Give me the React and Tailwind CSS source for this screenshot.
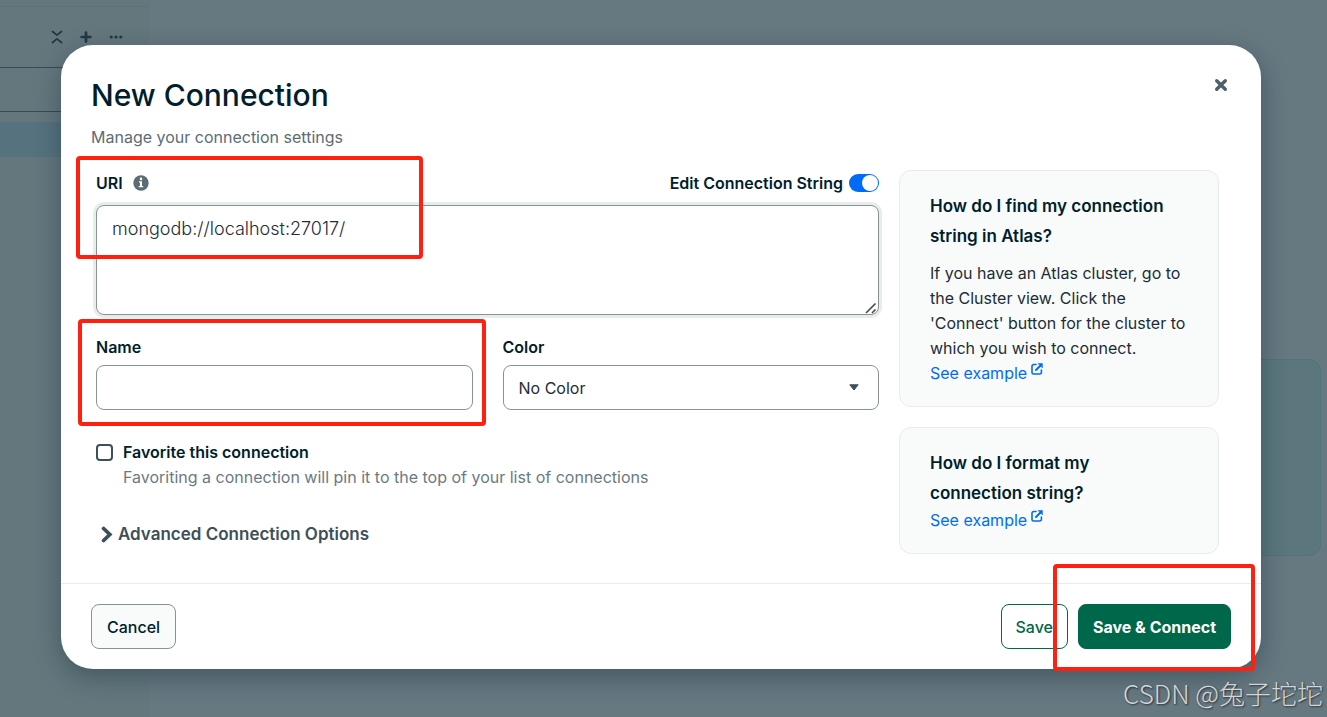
import React from "react";

function UnfoldLessIcon() {
  return (
    <svg width="12" height="14" viewBox="0 0 12 14" fill="none" stroke="currentColor" strokeWidth="1.700" strokeLinecap="round" strokeLinejoin="round" aria-hidden="true">
      <path d="M1.500 1.500 6 5.200l4.500-3.700M1.500 12.500 6 8.800l4.500 3.700" />
    </svg>
  );
}

function PlusIcon() {
  return (
    <svg width="12" height="12" viewBox="0 0 12 12" fill="none" stroke="currentColor" strokeWidth="2.700" strokeLinecap="round" aria-hidden="true">
      <path d="M6 1.600v8.800M1.600 6h8.800" />
    </svg>
  );
}

function EllipsisIcon() {
  return (
    <svg width="14" height="4" viewBox="0 0 14 4" fill="currentColor" aria-hidden="true">
      <circle cx="2.200" cy="2" r="1.600" />
      <circle cx="7" cy="2" r="1.600" />
      <circle cx="11.800" cy="2" r="1.600" />
    </svg>
  );
}

function CloseIcon() {
  return (
    <svg width="14" height="14" viewBox="0 0 14 14" fill="none" stroke="currentColor" strokeWidth="3.400" strokeLinecap="round" aria-hidden="true">
      <path d="m2.700 2.700 8.600 8.600M11.300 2.700l-8.600 8.600" />
    </svg>
  );
}

function InfoIcon() {
  return (
    <svg width="16" height="16" viewBox="0 0 16 16" aria-hidden="true">
      <circle cx="8" cy="8" r="7.700" fill="#5c6c75" />
      <circle cx="8" cy="3.900" r="1.300" fill="#fff" />
      <path d="M6 6.200h3v4.900h1.200v1.200H5.800v-1.200H7V7.400H6z" fill="#fff" />
    </svg>
  );
}

function ChevronRightIcon() {
  return (
    <svg width="14" height="18" viewBox="0 0 14 18" fill="none" stroke="currentColor" strokeWidth="3.800" strokeLinecap="round" strokeLinejoin="miter" aria-hidden="true">
      <path d="M3.600 2.500 9.800 8.500l-6.200 6" />
    </svg>
  );
}

function CaretDownIcon() {
  return (
    <svg width="10" height="7" viewBox="0 0 10 7" fill="currentColor" stroke="currentColor" strokeLinejoin="round" aria-hidden="true">
      <path d="M.800 .800h8.400L5 6z" />
    </svg>
  );
}

function ResizeGripIcon() {
  return (
    <svg width="12" height="12" viewBox="0 0 12 12" fill="none" stroke="#4a4a4a" strokeWidth="1.600" aria-hidden="true">
      <path d="M1 11 10.500 1.500M7 11l3.500-3.500" />
    </svg>
  );
}

function OpenNewTabIcon() {
  return (
    <svg width="12" height="12" viewBox="0 0 12 12" fill="none" stroke="currentColor" strokeWidth="1.600" strokeLinecap="round" strokeLinejoin="round" aria-hidden="true">
      <path d="M5 1.500H2.600A1.600 1.600 0 0 0 1 3.100v6.300A1.600 1.600 0 0 0 2.600 11h6.200a1.600 1.600 0 0 0 1.600-1.600V7" />
      <path d="M5 7 9.500 2.500" strokeWidth="2" />
      <path d="M7.400 .600h4v4z" fill="currentColor" strokeWidth=".600" />
    </svg>
  );
}

function Backdrop() {
  return (
    <div className="flex min-h-screen bg-[#667880]" aria-hidden="true">
      <div className="w-[149px] shrink-0 bg-[#64777d] pt-1.5 text-[#1e3946]">
        <div className="flex h-[61px] items-center justify-end gap-[17px] border-t border-[#5f7178] pr-[26px]">
          <UnfoldLessIcon />
          <PlusIcon />
          <EllipsisIcon />
        </div>
        <div className="h-[45px] border-y border-[#354b56]" />
        <div className="mt-2.5 h-[35px] bg-[#56727f]" />
      </div>
      <div className="flex grow items-start pt-[359px] pr-1.5 pl-10">
        <div className="h-[197px] grow rounded-xl border border-[#4d7677] bg-[#5b777d]" />
      </div>
    </div>
  );
}

function HelpCard({ title, children }) {
  return (
    <section className="rounded-xl border border-[#e8edeb] bg-[#f9fbfa] px-[30px] py-5">
      <h2 className="pr-4 text-[17px] leading-[30px] font-semibold">{title}</h2>
      {children}
      <a href="#example" className="flex items-start gap-1 text-base leading-[25px] text-[#016bf8]">
        See example
        <span className="pt-0.5">
          <OpenNewTabIcon />
        </span>
      </a>
    </section>
  );
}

function Highlight({ className }) {
  return <div className={"pointer-events-none absolute rounded-sm border-4 border-[#ff2010] " + className} />;
}

function ConnectionForm() {
  return (
    <form id="connection" className="min-w-0 grow pl-[5px]">
      <div className="flex h-[25px] items-center justify-between">
        <div className="flex items-center gap-2.5">
          <label htmlFor="uri" className="text-base font-semibold">URI</label>
          <InfoIcon />
        </div>
        <label className="flex items-center gap-1.5 text-base font-semibold">
          Edit Connection String
          <input
            type="checkbox"
            role="switch"
            defaultChecked
            className="h-[18px] w-[30px] appearance-none rounded-full bg-[#889397] p-px before:block before:size-4 before:rounded-full before:bg-white checked:bg-[#016bf8] checked:before:ml-3"
          />
        </label>
      </div>
      <div className="relative mt-2.5">
        <textarea
          id="uri"
          defaultValue="mongodb://localhost:27017/"
          className="block h-[110px] w-full resize-none rounded-lg border border-[#889397] bg-white px-[15px] py-2.5 text-[18px] leading-[26px] font-light text-[#1c2d38] ring-3 ring-[#e8edeb] outline-none"
        />
        <span className="pointer-events-none absolute right-0.5 bottom-px">
          <ResizeGripIcon />
        </span>
      </div>
      <div className="mt-5 grid grid-cols-2 gap-[30px]">
        <div>
          <label htmlFor="name" className="block text-base leading-[25px] font-semibold">Name</label>
          <input id="name" type="text" className="mt-[5px] block h-[45px] w-full rounded-lg border border-[#889397] bg-white px-[15px] text-base" />
        </div>
        <div>
          <label htmlFor="color" className="block text-base leading-[25px] font-semibold">Color</label>
          <div className="relative mt-[5px]">
            <select id="color" className="block h-[45px] w-full appearance-none rounded-lg border border-[#889397] bg-white px-[15px] text-base text-[#1c2d38]">
              <option>No Color</option>
            </select>
            <span className="pointer-events-none absolute inset-y-0 right-5 flex items-center text-[#3d4f58]">
              <CaretDownIcon />
            </span>
          </div>
        </div>
      </div>
      <div className="mt-[30px] flex items-start gap-2.5">
        <input
          id="favorite"
          type="checkbox"
          aria-describedby="favorite-help"
          className="mt-1 size-[17px] shrink-0 appearance-none rounded-sm border-2 border-[#3d4f58] checked:bg-[#016bf8]"
        />
        <div className="text-base leading-[25px]">
          <label htmlFor="favorite" className="block font-semibold">Favorite this connection</label>
          <p id="favorite-help" className="text-[#6b7a82]">Favoriting a connection will pin it to the top of your list of connections</p>
        </div>
      </div>
      <button type="button" className="mt-[30px] flex h-[30px] items-center gap-1 pl-1 text-[17px] font-semibold text-[#3d4f58]">
        <ChevronRightIcon />
        Advanced Connection Options
      </button>
    </form>
  );
}

export default function App() {
  return (
    <div className="relative min-h-screen overflow-hidden font-['Inter','Noto_Sans_CJK_SC',sans-serif] text-[#001e2b]">
      <Backdrop />
      <div className="absolute inset-x-0 top-0 pt-[45px] pr-[66px] pl-[61px]">
        <div role="dialog" aria-labelledby="dialog-title" className="relative rounded-[32px] bg-white shadow-[0_8px_26px_rgba(0,30,43,0.35)]">
          <header className="flex items-start justify-between pt-[30px] pr-[33px] pl-[30px]">
            <div>
              <h1 id="dialog-title" className="text-[30px] leading-[40px] font-medium">New Connection</h1>
              <p className="mt-2.5 text-base leading-[25px] text-[#5c6c75]">Manage your connection settings</p>
            </div>
            <button type="button" aria-label="Close" className="mt-[3px] text-[#4d606a]">
              <CloseIcon />
            </button>
          </header>
          <div className="flex items-start gap-5 pt-5 pr-[42px] pb-[29px] pl-[30px]">
            <ConnectionForm />
            <aside className="flex w-80 shrink-0 flex-col gap-5">
              <HelpCard title="How do I find my connection string in Atlas?">
                <p className="mt-2.5 text-base leading-[25px] text-[#1c2d38]">
                  If you have an Atlas cluster, go to the Cluster view. Click the 'Connect' button for the cluster to which you wish to connect.
                </p>
              </HelpCard>
              <HelpCard title="How do I format my connection string?" />
            </aside>
          </div>
          <footer className="flex gap-2.5 border-t border-[#e8edeb] px-[30px] py-5 text-base font-medium">
            <button type="button" className="mr-auto h-[45px] rounded-lg border border-[#889397] bg-[#f9fbfa] px-[15px]">Cancel</button>
            <button type="button" className="h-[45px] rounded-lg border border-[#00684a] bg-white px-3.5 text-[#00684a]">Save</button>
            <button type="submit" form="connection" className="h-[45px] rounded-lg border border-[#00684a] bg-[#00684a] px-3.5 font-bold text-white">
              Save &amp; Connect
            </button>
          </footer>
          <Highlight className="top-[111px] left-[15px] h-[103px] w-[347px]" />
          <Highlight className="top-[274px] left-[17px] h-[107px] w-[408px]" />
          <Highlight className="right-1.5 -bottom-0.5 h-[107px] w-[202px]" />
        </div>
      </div>
      <p className="absolute right-1 bottom-1.5 font-['Noto_Sans_CJK_SC',sans-serif] text-[26px] leading-[36px] font-light text-[#d3d6d8] [text-shadow:1px_1px_2px_rgba(0,0,0,0.6)]">
        CSDN @兔子坨坨
      </p>
    </div>
  );
}
